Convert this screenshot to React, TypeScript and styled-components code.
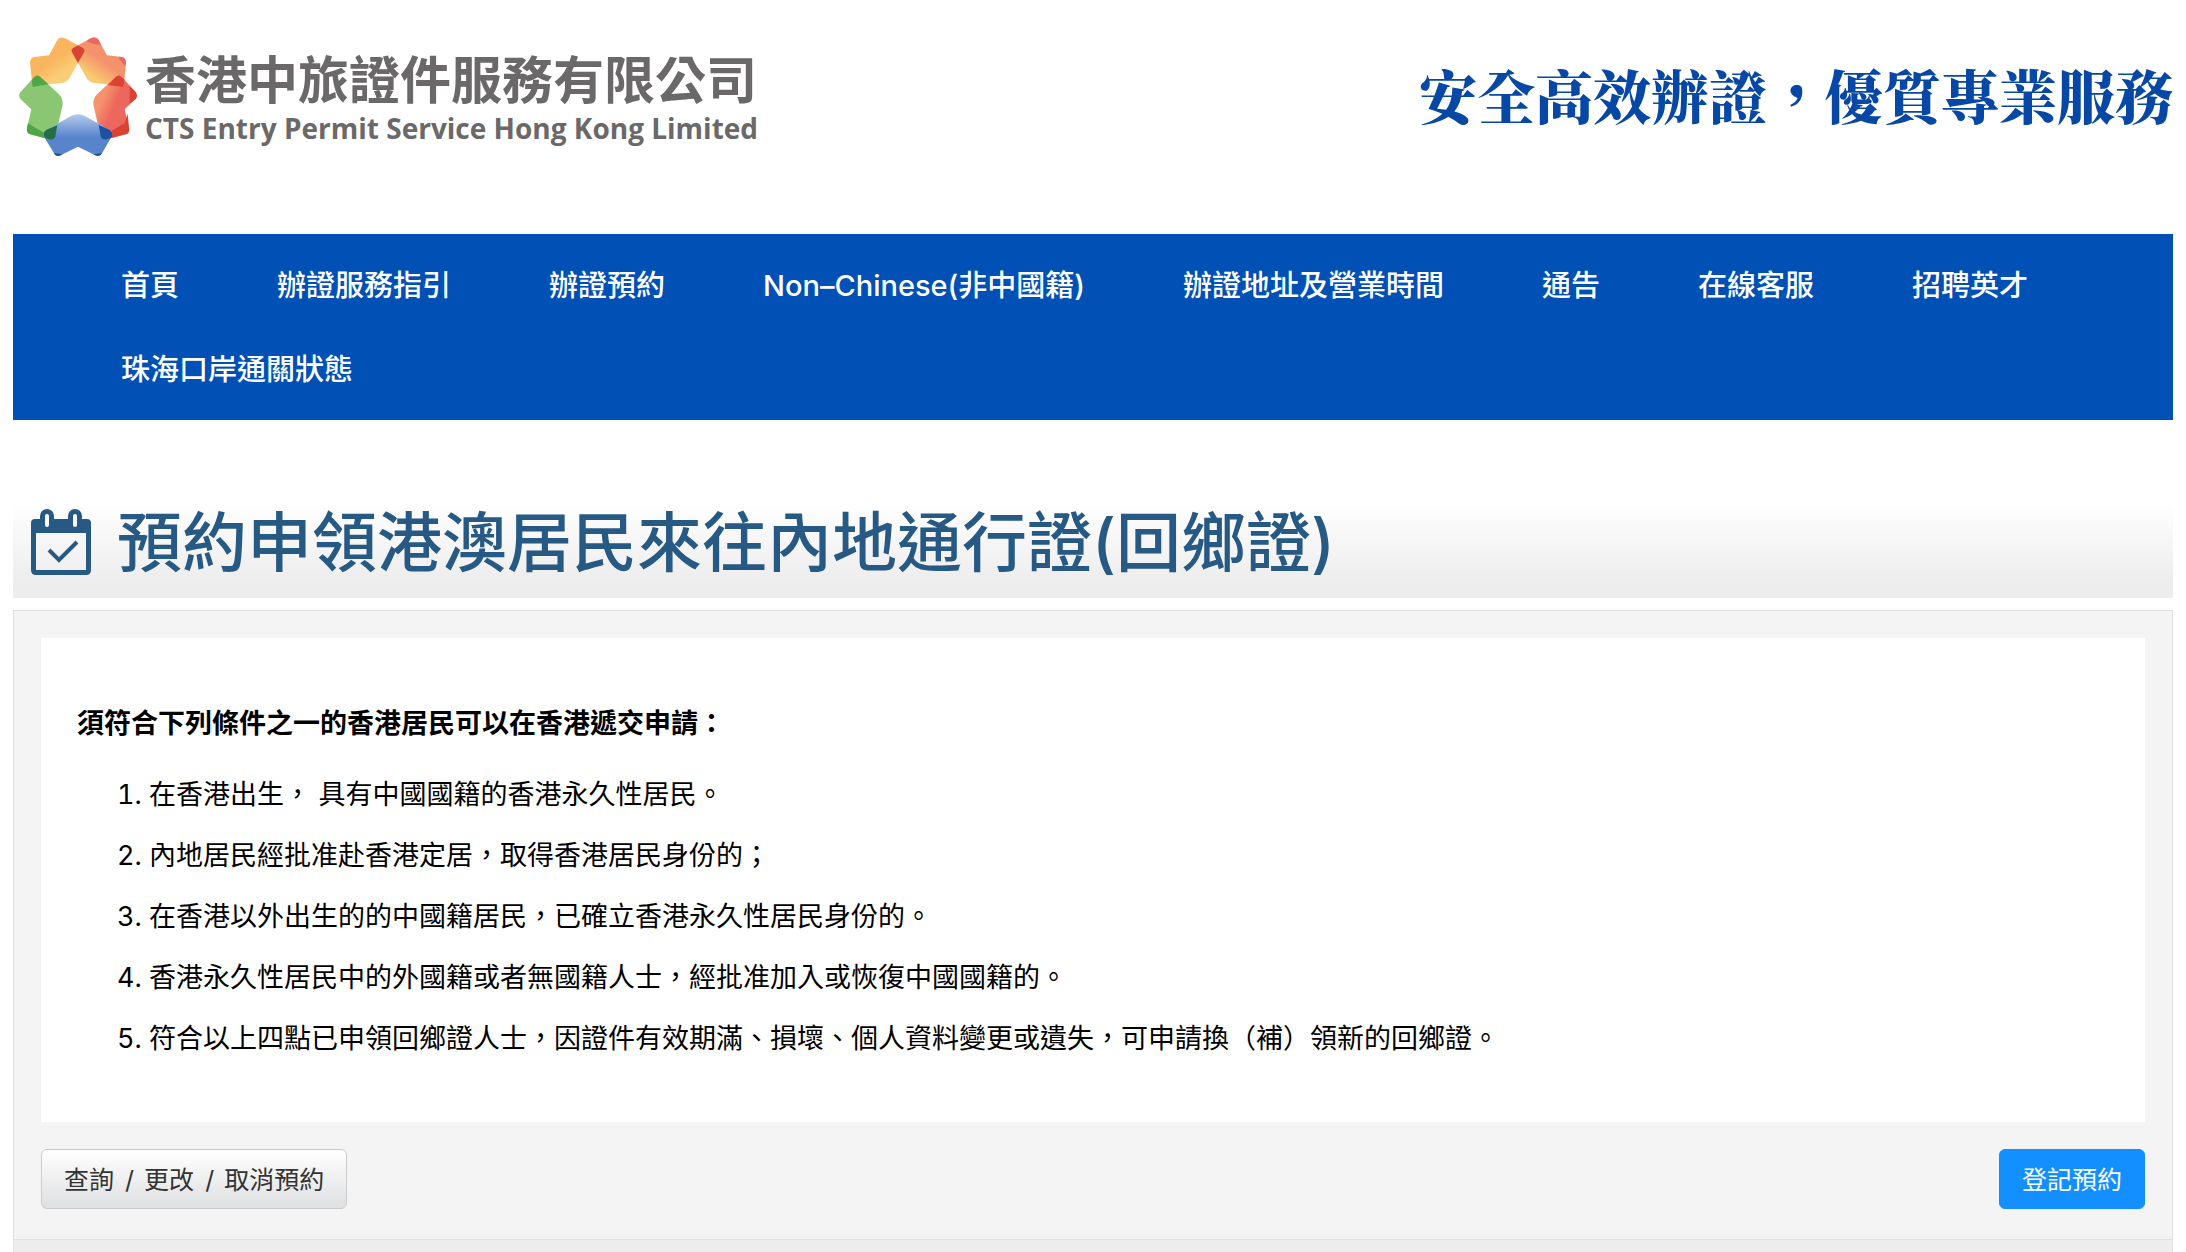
import React from "react";
import styled, { createGlobalStyle } from "styled-components";

const sans = `Inter, "Noto Sans CJK TC", sans-serif`;

const GlobalStyle = createGlobalStyle`
  *, *::before, *::after { box-sizing: border-box; }
  body {
    margin: 0;
    background: #fff;
    color: #000;
    font-family: ${sans};
  }
`;

const Page = styled.div`
  padding: 0 13px;
`;

const Header = styled.header`
  display: flex;
  align-items: center;
  justify-content: space-between;
  padding: 37px 0 78px 6px;
`;

const Brand = styled.a`
  display: flex;
  align-items: center;
  gap: 8px;
  color: #6a6869;
  text-decoration: none;
`;

const LogoMark = styled.svg`
  display: block;
  width: 118px;
  height: 119px;
`;

const BrandText = styled.span`
  display: flex;
  flex-direction: column;
  font-weight: 700;
  white-space: nowrap;
`;

const BrandName = styled.span`
  font-family: "Noto Sans CJK TC", sans-serif;
  font-size: 51px;
  line-height: 62px;
`;

const BrandLatin = styled.span`
  font-family: "Open Sans", sans-serif;
  font-size: 28px;
  line-height: 40px;
`;

const Slogan = styled.p`
  margin: 0;
  padding-bottom: 6px;
  color: #0748a6;
  font-family: "Noto Serif CJK TC", "Noto Sans CJK TC", serif;
  font-size: 58px;
  font-weight: 900;
  line-height: 80px;
  white-space: nowrap;
`;

const Nav = styled.nav`
  padding: 10px 108px 8px;
  background: #0050b5;
`;

const NavList = styled.ul`
  display: flex;
  flex-wrap: wrap;
  column-gap: 98px;
  margin: 0;
  padding: 0;
  list-style: none;
`;

const NavLink = styled.a`
  display: block;
  color: #fff;
  font-size: 29px;
  font-weight: 500;
  line-height: 84px;
  text-decoration: none;
  white-space: nowrap;
`;

const TitleBar = styled.div`
  display: flex;
  align-items: center;
  gap: 26px;
  margin-top: 66px;
  padding: 0 18px;
  background: linear-gradient(#fff 15%, #ededed 85%);
`;

const TitleIcon = styled.svg`
  display: block;
  flex: none;
  width: 60px;
  height: 66px;
`;

const Title = styled.h1`
  margin: 0;
  padding-top: 2px;
  color: #275985;
  font-size: 65px;
  font-weight: 500;
  line-height: 110px;
`;

const Card = styled.main`
  margin-top: 12px;
  padding: 27px 27px 30px;
  border: 1px solid #e0e0e0;
  background: #f4f4f4;
`;

const Notice = styled.section`
  padding: 65px 36px 53px;
  background: #fff;
`;

const NoticeHeading = styled.h2`
  margin: 0 0 20px;
  font-size: 27px;
  font-weight: 700;
  line-height: 41px;
`;

const Conditions = styled.ol`
  margin: 0;
  padding-left: 72px;
  font-size: 27px;
  line-height: 61px;
`;

const Actions = styled.div`
  display: flex;
  justify-content: space-between;
  margin-top: 27px;
`;

const Button = styled.button<{ $primary?: boolean }>`
  height: 60px;
  padding: 0 22px 2px;
  border: 1px solid ${(p) => (p.$primary ? "#148fff" : "#cbcbcd")};
  border-radius: 6px;
  background: ${(p) => (p.$primary ? "#148fff" : "linear-gradient(#fff, #dedfe1)")};
  color: ${(p) => (p.$primary ? "#fff" : "#333")};
  font-family: ${sans};
  font-size: 25px;
  cursor: pointer;
`;

const Slash = styled.span`
  margin: 0 3px 0 4px;
`;

const Footer = styled.footer`
  height: 12px;
  border: solid #e4e4e4;
  border-width: 0 1px;
  background: #ededed;
`;

const links = [
  "首頁",
  "辦證服務指引",
  "辦證預約",
  "Non–Chinese(非中國籍)",
  "辦證地址及營業時間",
  "通告",
  "在線客服",
  "招聘英才",
  "珠海口岸通關狀態",
];

const conditions = [
  "在香港出生， 具有中國國籍的香港永久性居民。",
  "內地居民經批准赴香港定居，取得香港居民身份的；",
  "在香港以外出生的的中國籍居民，已確立香港永久性居民身份的。",
  "香港永久性居民中的外國籍或者無國籍人士，經批准加入或恢復中國國籍的。",
  "符合以上四點已申領回鄉證人士，因證件有效期滿、損壞、個人資料變更或遺失，可申請換（補）領新的回鄉證。",
];

function Logo() {
  return (
    <LogoMark viewBox="57 52 354 357" preserveAspectRatio="none" aria-hidden="true">
      <defs>
        <linearGradient id="amber" gradientUnits="userSpaceOnUse" x1="140" y1="95" x2="195" y2="180">
          <stop offset="0.35" stopColor="#f9b65f" />
          <stop offset="0.8" stopColor="#f9ce75" />
        </linearGradient>
        <linearGradient id="coral" gradientUnits="userSpaceOnUse" x1="330" y1="95" x2="270" y2="180">
          <stop offset="0.35" stopColor="#f4926b" />
          <stop offset="0.9" stopColor="#f9ca70" />
        </linearGradient>
        <linearGradient id="ruby" gradientUnits="userSpaceOnUse" x1="290" y1="240" x2="370" y2="275">
          <stop offset="0.15" stopColor="#f4946d" />
          <stop offset="0.65" stopColor="#ec675d" />
        </linearGradient>
        <linearGradient id="azure" gradientUnits="userSpaceOnUse" x1="234" y1="284" x2="234" y2="390">
          <stop offset="0" stopColor="#b4c9eb" />
          <stop offset="0.65" stopColor="#5884cc" />
        </linearGradient>
      </defs>
      <path fill="url(#amber)" d="M234 77 198 57Q180 47 171 63L147 107 103 112Q91 114 90 128L97 198 185 190Q200 187 207 177L234 130Z" />
      <path fill="url(#coral)" d="M234 77 270 57Q288 47 297 63L321 107 365 112Q377 114 378 128L371 200 283 190Q268 187 261 177L234 130Z" />
      <path fill="#ec675d" d="M262 62 270 57Q288 47 297 63L303 75Q282 75 262 66ZM356 111 365 112Q377 114 378 128L376 140Q362 126 356 114Z" />
      <path fill="#da4333" d="M234 77 248 84Q256 89 252 98L234 130 216 98Q212 89 220 84Z" />
      <path fill="#8bc673" d="M103 172Q112 163 121 172L177 224Q191 238 187 260L166 350Q162 362 148 359L91 344Q78 340 81 325L94 269 62 239Q53 228 62 216Z" />
      <path fill="#4fa744" d="M103 172Q112 163 121 172L145 194 98 202 95 180ZM84 311Q103 323 133 340L140 357 91 344Q78 340 81 325Z" />
      <path fill="url(#ruby)" d="M365 172Q356 163 347 172L291 224Q277 238 281 260L302 350Q306 362 320 359L377 344Q390 340 387 325L374 269 406 239Q415 228 406 216Z" />
      <path fill="#da4333" d="M365 172Q356 163 347 172L323 196 369 202 374 180ZM389 199 406 216Q415 228 406 239L389 251ZM383 282 374 311 336 333 332 356 377 344Q390 340 387 325Z" />
      <path fill="url(#azure)" d="M212 290Q234 277 256 290L328 330Q341 338 334 353L306 401Q300 413 286 407L234 381 182 407Q168 413 162 401L133 353Q126 338 140 330Z" />
      <path fill="#246d45" d="M172 317 140 330Q126 338 135 354L148 359Q162 362 166 350Z" />
      <path fill="#1d51a4" d="M296 316 328 330Q341 338 334 354L320 359Q306 362 302 350ZM162 400 188 404 182 407Q168 413 162 401ZM280 404 306 400Q300 413 286 407Z" />
    </LogoMark>
  );
}

function CalendarCheck() {
  return (
    <TitleIcon viewBox="0 0 60 66" fill="none" stroke="#275985" aria-hidden="true">
      <path fill="#275985" stroke="none" d="M4 10H56Q60 10 60 14V61Q60 66 55 66H5Q0 66 0 61V14Q0 10 4 10ZM5 24V61H55V24Z" fillRule="evenodd" />
      <rect x="11.500" y="2.500" width="9" height="18" rx="4.500" fill="#fff" strokeWidth="5" />
      <rect x="39.500" y="2.500" width="9" height="18" rx="4.500" fill="#fff" strokeWidth="5" />
      <path d="M18 41 28 51 46 33" strokeWidth="4" />
    </TitleIcon>
  );
}

export default function App() {
  return (
    <>
      <GlobalStyle />
      <Page>
        <Header>
          <Brand href="#">
            <Logo />
            <BrandText>
              <BrandName>香港中旅證件服務有限公司</BrandName>
              <BrandLatin>CTS Entry Permit Service Hong Kong Limited</BrandLatin>
            </BrandText>
          </Brand>
          <Slogan>安全高效辦證，優質專業服務</Slogan>
        </Header>
        <Nav>
          <NavList>
            {links.map((label) => (
              <li key={label}>
                <NavLink href="#">{label}</NavLink>
              </li>
            ))}
          </NavList>
        </Nav>
        <TitleBar>
          <CalendarCheck />
          <Title>預約申領港澳居民來往內地通行證(回鄉證)</Title>
        </TitleBar>
        <Card>
          <Notice>
            <NoticeHeading>須符合下列條件之一的香港居民可以在香港遞交申請：</NoticeHeading>
            <Conditions>
              {conditions.map((text) => (
                <li key={text}>{text}</li>
              ))}
            </Conditions>
          </Notice>
          <Actions>
            <Button type="button">
              查詢 <Slash>/</Slash> 更改 <Slash>/</Slash> 取消預約
            </Button>
            <Button type="button" $primary>
              登記預約
            </Button>
          </Actions>
        </Card>
        <Footer />
      </Page>
    </>
  );
}
